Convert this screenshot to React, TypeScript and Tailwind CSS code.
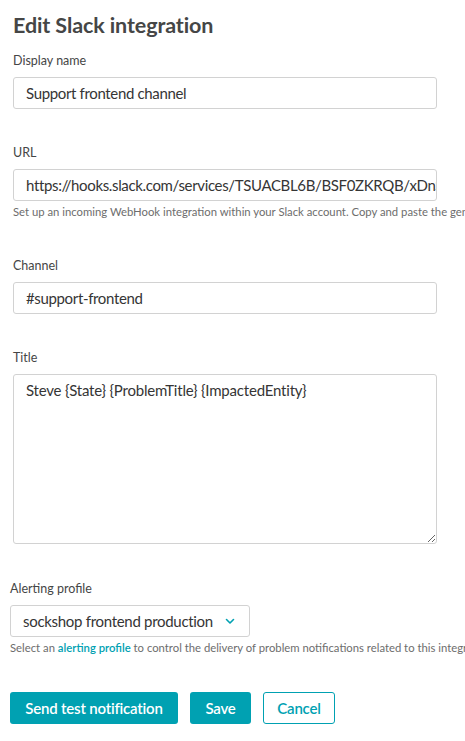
import React from "react";

const Label = ({ children }: any) => (
  <div className="h-[18px] leading-[18px] text-[12.5px] text-[#454646] mb-[7px]">{children}</div>
);

const Input = ({ value }: any) => (
  <div className="w-[424px] h-[32px] border border-[#d2d2d2] rounded-[3px] bg-white px-[12px] flex items-center text-[15px] tracking-[-0.35px] text-[#353535] whitespace-nowrap overflow-hidden">
    {value}
  </div>
);

const App = () => {
  return (
    <div
      className="w-[465px] h-[741px] bg-white overflow-hidden"
      style={{ fontFamily: 'Lato, "Noto Sans", sans-serif' }}
    >
      <div className="flex flex-col pl-[13px] pt-[11px]">
        <h1 className="h-[28px] leading-[28px] text-[21.5px] tracking-[-0.1px] font-bold text-[#454646]">
          Edit Slack integration
        </h1>

        <div className="mt-[13px]">
          <Label>Display name</Label>
          <Input value="Support frontend channel" />
        </div>

        <div className="mt-[35px]">
          <Label>URL</Label>
          <Input value="https://hooks.slack.com/services/TSUACBL6B/BSF0ZKRQB/xDnSfG7hQ" />
          <p className="mt-[4px] h-[14px] leading-[14px] text-[11.3px] text-[#6d6d6d] whitespace-nowrap">
            Set up an incoming WebHook integration within your Slack account. Copy and paste the generated WebHook URL into the field above.
          </p>
        </div>

        <div className="mt-[38px]">
          <Label>Channel</Label>
          <Input value="#support-frontend" />
        </div>

        <div className="mt-[35px]">
          <Label>Title</Label>
          <textarea
            readOnly
            defaultValue="Steve {State} {ProblemTitle} {ImpactedEntity}"
            className="block w-[424px] h-[170px] border border-[#d2d2d2] rounded-[3px] bg-white px-[12px] py-[4px] text-[15px] tracking-[-0.2px] leading-[22px] text-[#353535] outline-none"
          />
        </div>

        <div className="mt-[36px] -ml-[3px]">
          <Label>Alerting profile</Label>
          <div className="w-[240px] h-[32px] border border-[#d2d2d2] rounded-[3px] bg-white pl-[12px] pr-[14px] flex items-center justify-between text-[15px] tracking-[-0.3px] text-[#353535] whitespace-nowrap">
            <span>sockshop frontend production</span>
            <svg width="10" height="7" viewBox="0 0 10 7" fill="none">
              <path d="M1.5 1.5 L5 5 L8.5 1.5" stroke="#00a1b2" strokeWidth="1.6" strokeLinecap="round" strokeLinejoin="round" />
            </svg>
          </div>
          <p className="mt-[4px] h-[14px] leading-[14px] text-[11.3px] text-[#6d6d6d] whitespace-nowrap">
            Select an <span className="text-[#00a1b2] font-semibold">alerting profile</span> to control the delivery of problem notifications related to this integration.
          </p>

          <div className="mt-[37px] flex gap-[12px]">
            <button className="h-[32px] w-[168px] rounded-[3px] bg-[#00a1b2] text-white text-[15px] tracking-[-0.2px] font-semibold">
              Send test notification
            </button>
            <button className="h-[32px] w-[61px] rounded-[3px] bg-[#00a1b2] text-white text-[15px] tracking-[-0.2px] font-semibold">
              Save
            </button>
            <button className="h-[32px] w-[72px] rounded-[3px] border border-[#00a1b2] bg-white text-[#00a1b2] text-[15px] tracking-[-0.2px] font-semibold">
              Cancel
            </button>
          </div>
        </div>
      </div>
    </div>
  );
};

export default App;
